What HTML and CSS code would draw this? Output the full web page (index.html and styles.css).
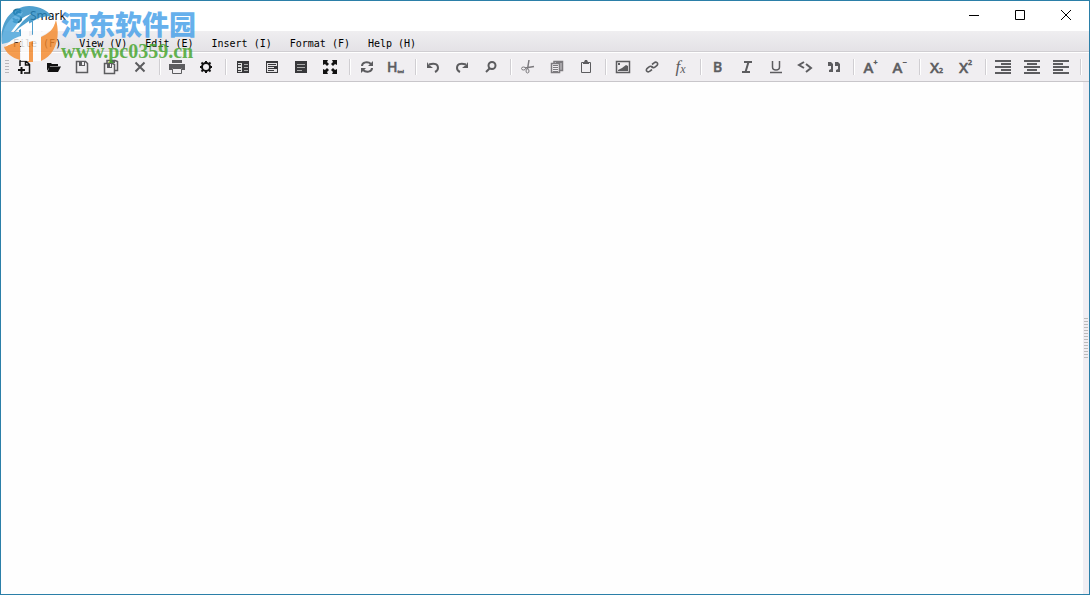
FILE: index.html
```html
<!DOCTYPE html>
<html lang="en">
<head>
<meta charset="utf-8">
<title>Smark</title>
<link rel="stylesheet" href="styles.css">
</head>
<body>
<div class="window">
  <header class="titlebar">
    <svg class="app-icon" viewBox="0 0 16 16"><path d="M12 3C9 0 4 2 5 5s6 2 7 5-4 6-8 3M12 5C9 3 7 4 8 6M4 10c1 2 4 3 5 1" fill="none" stroke="#236f91" stroke-width="2"/></svg>
    <h1 class="title">Smark</h1>
    <button class="win-btn" aria-label="Minimize"><svg viewBox="0 0 12 12"><path d="M1 5.500h10"/></svg></button>
    <button class="win-btn" aria-label="Maximize"><svg viewBox="0 0 12 12"><path d="M1.500 .5h9v9h-9z"/></svg></button>
    <button class="win-btn" aria-label="Close"><svg viewBox="0 0 12 12"><path d="M1 0l10 10M11 0L1 10"/></svg></button>
  </header>
  <nav class="menubar">
    <button>File (F)</button><button>View (V)</button><button>Edit (E)</button><button>Insert (I)</button><button>Format (F)</button><button>Help (H)</button>
  </nav>
  <div class="toolbar" role="toolbar">
    <span class="grip"></span>
    <button class="tool black" aria-label="New"><svg viewBox="0 0 16 16"><path class="l" stroke-width="1.500" d="M4 7V2h6l3.500 3.500V14H8M9.500 2v4h4"/><path class="l w2" d="M2 11h7M5.500 8v7"/></svg></button>
    <button class="tool black" aria-label="Open"><svg viewBox="0 0 16 16"><path d="M2 12V4h4l1 1h6v2H5zM4.500 7.500H16l-3 5.500H2.500z"/></svg></button>
    <button class="tool" aria-label="Save"><svg viewBox="0 0 16 16"><path class="l" stroke-width="1.500" d="M2.500 2.500h9l2 2v9h-11z"/><path d="M5 2h6v5H5z"/><path fill="#f0eef1" d="M8 3h2v3H8z"/></svg></button>
    <button class="tool" aria-label="Save all"><svg viewBox="0 0 16 16"><path class="l" stroke-width="1.500" d="M1.500 4.500h8l2 1v9h-10zM4 4V1.500h8l2.500 1v9H12"/><path d="M4 4h5v5H4zM7 1h5v3H7z"/><path fill="#f0eef1" d="M7 5h1v3H7z"/></svg></button>
    <button class="tool" aria-label="Close file"><svg viewBox="0 0 16 16"><path class="l w2" d="M3.500 3.500l9 9M12.500 3.500l-9 9"/></svg></button>
    <span class="sep"></span>
    <button class="tool" aria-label="Print"><svg viewBox="0 0 16 16"><path d="M3 1h10v3H3zM0 5h16v6h-3V9H3v2H0z"/><path class="l" d="M3.500 9.500h9v5h-9z"/></svg></button>
    <button class="tool black" aria-label="Settings"><svg viewBox="0 0 16 16"><circle class="l w2" cx="8" cy="8" r="4"/><path class="l w2" d="M8 2v2M8 12v2M2 8h2M12 8h2M3.500 3.500l1.600 1.600M10.900 10.900l1.600 1.600M3.500 12.500l1.600-1.600M10.900 5.100l1.600-1.600"/></svg></button>
    <span class="sep"></span>
    <button class="tool dark" aria-label="Split view"><svg viewBox="0 0 16 16"><path d="M2 2h12v12H2z"/><path fill="#ddd" d="M3 4h5v9H3z"/><path class="l" d="M3 5.500h3M3 8.500h3M3 11.500h3M7.500 4v9"/><path class="pale" d="M9 5.500h4M9 8.500h4M9 11.500h4"/></svg></button>
    <button class="tool dark" aria-label="Reading view"><svg viewBox="0 0 16 16"><path d="M2 2h12v12H2z"/><path fill="#e4e2e5" d="M3 4h10v9H3z"/><path class="l" d="M4 5.500h8M4 7.500h8M4 9.500h6M4 11.500h6"/><path d="M10 7h3v3h-3z"/></svg></button>
    <button class="tool dark" aria-label="Writing view"><svg viewBox="0 0 16 16"><path d="M2 2h12v12H2z"/><path class="pale" d="M4 5.500h8M4 8.500h8M4 11.500h5"/></svg></button>
    <button class="tool black" aria-label="Full screen"><svg viewBox="0 0 16 16"><path d="M1 1h5L5 3l2 2-2 2-2-2-2 1zM15 1v5l-2-1-2 2-2-2 2-2-1-2zM1 15v-5l2 1 2-2 2 2-2 2 1 2zM15 15h-5l1-2-2-2 2-2 2 2 2-1z"/></svg></button>
    <span class="sep"></span>
    <button class="tool" aria-label="Refresh"><svg viewBox="0 0 16 16"><path class="l w2" d="M3 7c0-4 6-5 9-2M13 9c0 4-6 5-9 2"/><path d="M14 2v5H9zM2 14V9h5z"/></svg></button>
    <button class="tool" aria-label="HTML"><span class="glyph html">H<small class="tiny">tml</small></span></button>
    <span class="sep"></span>
    <button class="tool" aria-label="Undo"><svg viewBox="0 0 16 16"><path class="l w2" d="M4 5.500c6-2 9 0 9 3.500 0 2-1 3-3 4"/><path d="M2 3v6h6L5.500 7 4 6z"/></svg></button>
    <button class="tool" aria-label="Redo"><svg viewBox="0 0 16 16"><path class="l w2" d="M12 5.500C6 3.500 3 5.500 3 9c0 2 1 3 3 4"/><path d="M14 3v6H8l2.500-2L12 6z"/></svg></button>
    <button class="tool" aria-label="Find"><svg viewBox="0 0 16 16"><circle class="l w2" cx="9" cy="6.500" r="3.500"/><path class="l w2" d="M6.500 9.500L3 13"/></svg></button>
    <span class="sep"></span>
    <button class="tool light" aria-label="Cut"><svg viewBox="0 0 16 16"><path class="l" stroke-width="1.500" d="M9 1L7.500 10M14 7.500L5 9"/><ellipse class="l" cx="3.500" cy="9.500" rx="2" ry="1.500"/><ellipse class="l" cx="7.500" cy="12" rx="1.500" ry="2"/></svg></button>
    <button class="tool light" aria-label="Copy"><svg viewBox="0 0 16 16"><path class="l" stroke-width="1.500" d="M5 4V2.500h8.500v9H11M2.500 4.500h8v9h-8z"/><path class="l" d="M4 6.500h5M4 8.500h5M4 10.500h5M12 4v7M7 3.500h6M4 12.500h5"/></svg></button>
    <button class="tool" aria-label="Paste"><svg viewBox="0 0 16 16"><path class="l" d="M3.500 3.500h9v10h-9z"/><path d="M5 3h1l1-2h2l1 2h1v2H5z"/></svg></button>
    <span class="sep"></span>
    <button class="tool" aria-label="Image"><svg viewBox="0 0 16 16"><path class="l" stroke-width="1.500" d="M1.500 2.500h13v11h-13z"/><path d="M3 12v-1l4-2 4-3 2 1v5zM3 4h2v2H3z"/></svg></button>
    <button class="tool" aria-label="Link"><svg viewBox="0 0 16 16"><path class="l" stroke-width="1.600" d="M9 8.500C8 7 6 7 5 8L3 9.500C1 12 4 14 6 12l2-1.500M7 7c1 2 3 2 4 1l2-1.500C15 4 12 2 10 4L8 5.500"/></svg></button>
    <button class="tool" aria-label="Formula"><span class="glyph formula">f<small>x</small></span></button>
    <span class="sep"></span>
    <button class="tool" aria-label="Bold"><b class="glyph bold">B</b></button>
    <button class="tool" aria-label="Italic"><svg viewBox="0 0 16 16"><path class="l w2" d="M5 3h8M3 13h8M9.500 3l-3 10"/></svg></button>
    <button class="tool" aria-label="Underline"><svg viewBox="0 0 16 16"><path class="l" stroke-width="1.500" d="M4.500 2v6c0 4 7 4 7 0V2M2 13.500h12"/></svg></button>
    <button class="tool" aria-label="Code"><svg viewBox="0 0 16 16"><path class="l w2" d="M7 3L2 6l5 3M9 5l5 4-5 4"/></svg></button>
    <button class="tool" aria-label="Quote"><svg viewBox="0 0 16 16"><path d="M2 3h3l2 2v8H3v-2l2-1V7H2zM9 3h3l2 2v8h-4v-2l2-1V7H9z"/></svg></button>
    <span class="sep"></span>
    <button class="tool" aria-label="Larger text"><span class="glyph">A<sup>+</sup></span></button>
    <button class="tool" aria-label="Smaller text"><span class="glyph">A<sup>−</sup></span></button>
    <span class="sep"></span>
    <button class="tool" aria-label="Subscript"><span class="glyph">X<sub>2</sub></span></button>
    <button class="tool" aria-label="Superscript"><span class="glyph">X<sup>2</sup></span></button>
    <span class="sep"></span>
    <button class="tool" aria-label="Align right"><svg viewBox="0 0 16 16"><path class="l w2" d="M0 2h16M6 5h10M0 8h16M6 11h10M0 14h16"/></svg></button>
    <button class="tool" aria-label="Align center"><svg viewBox="0 0 16 16"><path class="l w2" d="M0 2h16M3 5h10M0 8h16M3 11h10M0 14h16"/></svg></button>
    <button class="tool" aria-label="Align left"><svg viewBox="0 0 16 16"><path class="l w2" d="M0 2h16M0 5h10M0 8h16M0 11h10M0 14h16"/></svg></button>
    <span class="sep"></span>
  </div>
  <main class="workspace">
    <textarea class="editor" aria-label="Document"></textarea>
    <div class="splitter"><span class="splitter-grip"></span></div>
  </main>
  <div class="watermark">
    <svg class="mark" viewBox="0 0 58 62">
      <path fill="#2a8cc4" d="M1 43C-2 21 10 6 28 5c11 0 20 5 24 12-5-3-9-2-13 1v12l-8 4V21l-4 2v11l-9 3v-8l-6 3 10-12 8-7C16 18 7 28 1 43z"/>
      <path fill="#4aa6dc" d="M1 43C0 28 9 14 22 11l-6 12-6 8h9v8C12 40 6 42 1 43z"/>
      <path fill="#f58a2c" d="M3 46c6-3 11-4 16-5v18C11 57 5 52 3 46zM27 41l5-2v22h-5zM40 60V36c7-3 12-7 14-14l1-3c5 18-1 35-15 41z"/>
      <path fill="#fff" d="M18 27l10-7v15l4-1V20l8-4v15c6-2 11-6 14-11-1 7-7 12-14 15v25h-8V40l-4 1v19h-8V40c-6 1-11 3-16 6 4-6 9-9 16-11v-7l-6 3z"/>
    </svg>
    <div class="mark-text"><span class="site-name" lang="zh-CN">河东软件园</span><span class="site-url">www.pc0359.cn</span></div>
  </div>
</div>
</body>
</html>
```
FILE: styles.css
```css
* { box-sizing: border-box; }
body { margin: 0; font-family: "Noto Sans", sans-serif; }
button { border: 0; padding: 0; background: none; color: inherit; font: inherit; }
.window {
  position: relative;
  display: flex;
  flex-direction: column;
  height: 100vh;
  border: 1px solid #2b7fa8;
  background: #fff;
}
.titlebar { display: flex; align-items: center; height: 30px; padding-left: 8px; }
.app-icon { width: 16px; height: 16px; }
.title { flex: 1; margin: 0 0 0 5px; font-size: 12px; line-height: 16px; font-weight: 400; color: #111; }
.win-btn { display: flex; align-items: center; justify-content: center; width: 46px; height: 30px; }
.win-btn svg { width: 12px; height: 12px; fill: none; stroke: #000; }
.menubar {
  display: flex;
  height: 21px;
  padding: 2px 0 0 3px;
  background: linear-gradient(#efeef0, #e4e2e6);
  border-bottom: 1px solid #d0ced2;
  font: 10px/18px "DejaVu Sans Mono", monospace;
  color: #000;
}
.menubar button { padding: 2px 9px 0; }
.toolbar {
  display: flex;
  align-items: center;
  height: 30px;
  border-top: 1px solid #fff;
  border-bottom: 1px solid #c8c6ca;
  background: #f0eef1;
  color: #5c5c5f;
}
.grip {
  width: 4px;
  height: 15px;
  margin-left: 4px;
  background: repeating-linear-gradient(#b8b6ba 0 1px, transparent 1px 3px);
}
.tool { display: flex; align-items: center; justify-content: center; width: 29px; height: 26px; }
.tool svg { width: 16px; height: 16px; fill: currentColor; }
.tool .l { fill: none; stroke: currentColor; }
.tool .w2 { stroke-width: 2; }
.tool .pale { fill: none; stroke: #aaa; }
.black { color: #111; }
.dark { color: #38383b; }
.light { color: #7c7a7e; }
.sep { width: 2px; height: 16px; margin: 0 1px 0 5px; border-left: 1px solid #d0ced2; border-right: 1px solid #fff; }
.glyph { display: flex; align-items: center; font-size: 15px; line-height: 16px; font-weight: 500; -webkit-text-stroke: 0.5px; }
.glyph sup, .glyph sub { font-size: 7px; line-height: 8px; }
.glyph sup { align-self: flex-start; }
.glyph sub { align-self: flex-end; }
.html { font-size: 14px; }
.bold { font-size: 14px; }
.tiny { align-self: flex-end; font-size: 4px; line-height: 6px; }
.formula { font: italic 17px/16px "Liberation Serif", serif; -webkit-text-stroke: 0; }
.formula small { align-self: flex-end; font-size: 12px; line-height: 12px; }
.workspace { display: flex; flex: 1; min-height: 0; }
.editor { flex: 1; border: 0; padding: 8px; resize: none; outline: 0; background: #fefefe; }
.splitter { display: flex; align-items: center; justify-content: center; width: 6px; background: #f0eef3; }
.splitter-grip { width: 4px; height: 40px; background: repeating-linear-gradient(#bbb 0 1px, transparent 1px 3px); }
.watermark { position: absolute; top: 0; left: 0; display: flex; opacity: 0.82; pointer-events: none; }
.mark { width: 58px; height: 62px; }
.mark-text { display: flex; flex-direction: column; padding: 7px 0 0 2px; }
.site-name { font: 900 27px/32px "Noto Sans CJK SC", sans-serif; color: #459fe8; }
.site-url { font: bold 20px/22px "Liberation Serif", serif; color: #44a42c; }
```
